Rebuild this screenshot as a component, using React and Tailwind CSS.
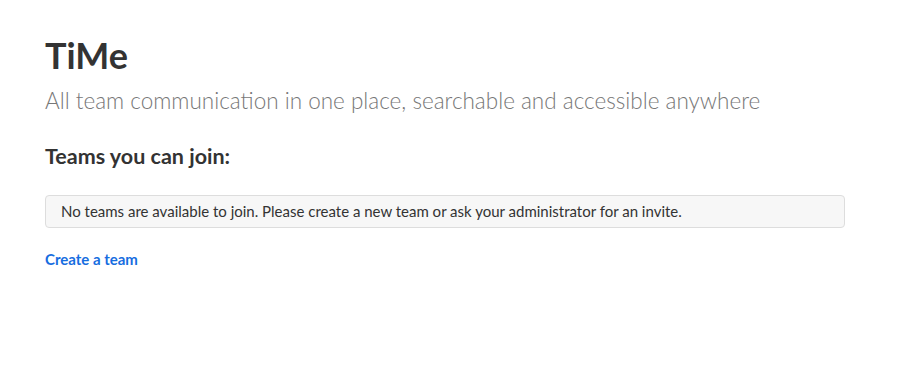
export default function App() {
  return (
    <div className="min-h-screen bg-white font-['Lato','Liberation_Sans',sans-serif] text-[#333]">
      <div className="px-[45px] pt-[33px]">
        <h1 className="text-[36px] font-bold leading-[44px] text-[#333]">TiMe</h1>
        <p className="mt-[9px] text-[22.5px] font-light leading-[30px] text-[#777]">
          All team communication in one place, searchable and accessible anywhere
        </p>
        <h4 className="mt-[26px] text-[21.5px] font-bold leading-[28px] text-[#333]">Teams you can join:</h4>
        <div className="mt-[25px] w-[800px] rounded-[4px] border border-[#ddd] bg-[#f7f7f7] px-[15px] py-[6px] text-[15px] leading-[19px] text-[#333]">
          No teams are available to join. Please create a new team or ask your administrator for an invite.
        </div>
        <div className="mt-[19px]">
          <a href="#" className="text-[15px] font-bold leading-[20px] text-[#166de0]">
            Create a team
          </a>
        </div>
      </div>
    </div>
  );
}
